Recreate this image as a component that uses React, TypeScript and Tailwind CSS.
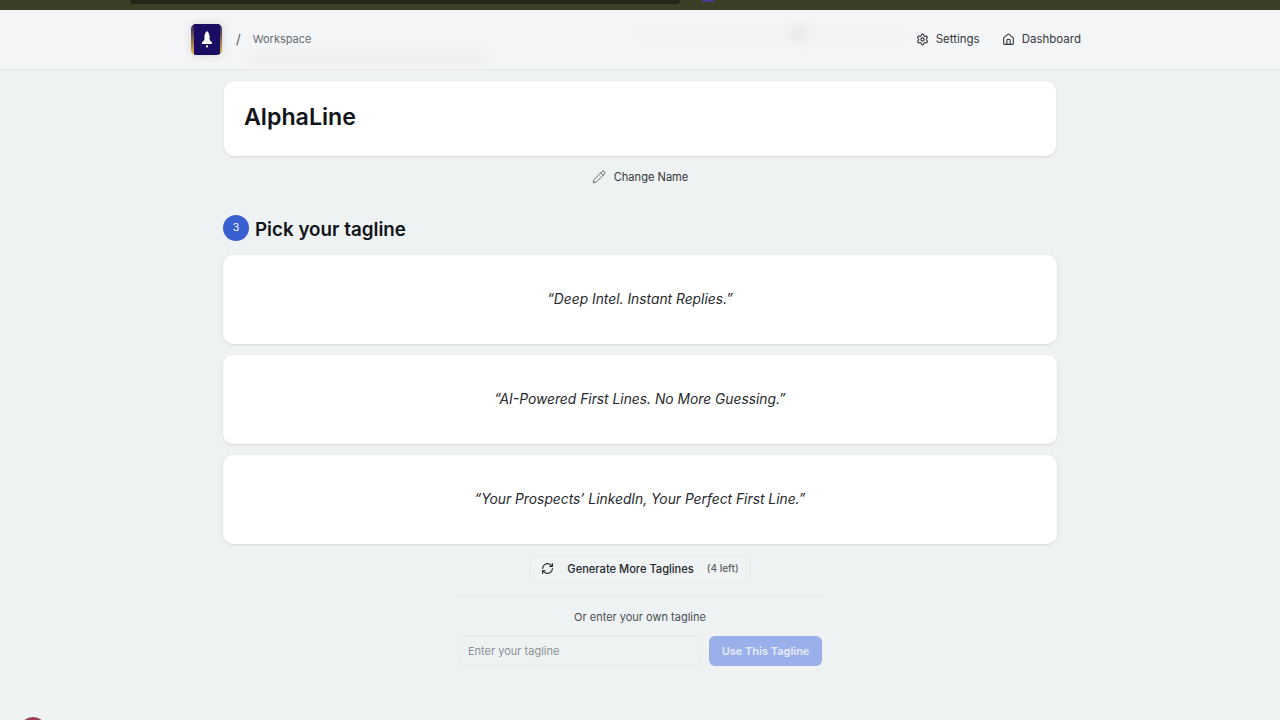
import { Home, Pencil, RefreshCw, Settings } from 'lucide-react';

const taglines = [
  '“Deep Intel. Instant Replies.”',
  '“AI-Powered First Lines. No More Guessing.”',
  '“Your Prospects’ LinkedIn, Your Perfect First Line.”',
];

function Logo() {
  return (
    <div className="w-[31px] h-[31px] rounded-[5px] overflow-hidden bg-gradient-to-b from-[#2a1060] via-[#8a6a50] to-[#e8b850] flex justify-center shadow-[0_0_8px_rgba(0,0,0,0.14)]">
      <div className="w-[26px] h-[31px] bg-[#1b0c63] flex items-center justify-center">
        <svg width="10" height="17" viewBox="0 0 10 17" fill="#fff">
          <path d="M5 0C6.8 1.6 7.6 3.6 7.6 6V9L10 11.6V13H0V11.6L2.4 9V6C2.4 3.6 3.2 1.6 5 0Z" />
          <circle cx="5" cy="15.4" r="1.1" />
        </svg>
      </div>
    </div>
  );
}

export default function App() {
  return (
    <div className="w-full h-[720px] overflow-hidden relative bg-[#eef2f3] text-[#111418] font-['Inter','Liberation_Sans',sans-serif]">
      <div className="h-[10px] bg-[#3c3f28] flex">
        <div className="ml-[130px] w-[550px] h-[4px] bg-[#23261a] rounded-b-md" />
        <div className="ml-[22px] w-[12px] h-[2px] bg-[#4a3d8f]" />
      </div>

      <header className="h-[60px] bg-[#f4f5f6] border-b border-[#e6e9ea] flex items-center pl-[191px] pr-[199px]">
        <Logo />
        <span className="ml-[14px] text-[13px] text-[#555]">/</span>
        <span className="ml-[12px] text-[11px] text-[#666b70]">Workspace</span>
        <nav className="ml-auto flex items-center gap-[22px] text-[11.5px] text-[#34383c]">
          <div className="flex items-center gap-[7px]">
            <Settings size={13} />
            <span>Settings</span>
          </div>
          <div className="flex items-center gap-[7px]">
            <Home size={13} />
            <span>Dashboard</span>
          </div>
        </nav>
      </header>

      <main className="w-[834px] mx-auto pt-[11px]">
        <section className="h-[75px] mx-[1px] bg-white rounded-[10px] shadow-[0_1px_3px_rgba(0,0,0,0.1)] flex items-center px-[20px]">
          <h1 className="text-[23.2px] font-semibold pb-[2px]">AlphaLine</h1>
        </section>

        <div className="mt-[13px] flex items-center justify-center gap-[8px] text-[11.1px] text-[#34383c]">
          <Pencil size={14} strokeWidth={1.25} />
          <span>Change Name</span>
        </div>

        <div className="mt-[27px] flex items-center gap-[6px]">
          <div className="w-[26px] h-[26px] rounded-full bg-[#3a5fd0] text-white text-[10.5px] flex items-center justify-center">
            3
          </div>
          <h2 className="mt-[3px] text-[18.8px] font-semibold">Pick your tagline</h2>
        </div>

        <div className="mt-[11px] flex flex-col gap-[11px]">
          {taglines.map((tagline) => (
            <div
              key={tagline}
              className="h-[89px] bg-white rounded-[10px] shadow-[0_1px_3px_rgba(0,0,0,0.1)] flex items-center justify-center text-[13.8px] italic text-[#25282c]"
            >
              {tagline}
            </div>
          ))}
        </div>

        <div className="mt-[11px] flex justify-center">
          <button className="h-[28px] w-[220px] rounded-[7px] bg-[#f0f3f4] border border-[#e8ebec] flex items-center justify-center text-[11.1px] font-medium text-[#23272b]">
            <RefreshCw size={13} />
            <span className="ml-[13px]">Generate More Taglines</span>
            <span className="ml-[13px] text-[10px] text-[#5b6065]">(4 left)</span>
          </button>
        </div>

        <div className="w-[364px] mx-auto mt-[13px] border-t border-[#e4e8e9] pt-[12px]">
          <p className="text-center text-[11px] text-[#4a4e52]">Or enter your own tagline</p>
          <div className="mt-[11px] flex gap-[7px]">
            <input
              placeholder="Enter your tagline"
              className="w-[244px] h-[30px] rounded-[7px] border border-[#e8ebec] bg-[#eff2f3] px-[9px] text-[11px] placeholder:text-[#8b9095]"
            />
            <button className="flex-1 h-[30px] rounded-[6px] bg-[#9bb0ea] text-[#e6ebf8] text-[11px] font-semibold">
              Use This Tagline
            </button>
          </div>
        </div>
      </main>

      <div className="absolute left-[250px] top-[53px] w-[235px] h-[10px] bg-[#eeeff1] blur-[5px]" />
      <div className="absolute left-[640px] top-[30px] w-[260px] h-[6px] bg-[#f0f1f2] blur-[4px]" />
      <div className="absolute left-[790px] top-[24px] w-[18px] h-[18px] rounded-full bg-[#e9eaeb] blur-[4px]" />
      <div className="absolute left-[19px] top-[717px] w-[28px] h-[28px] rounded-full bg-[#9a3f58]" />
    </div>
  );
}
